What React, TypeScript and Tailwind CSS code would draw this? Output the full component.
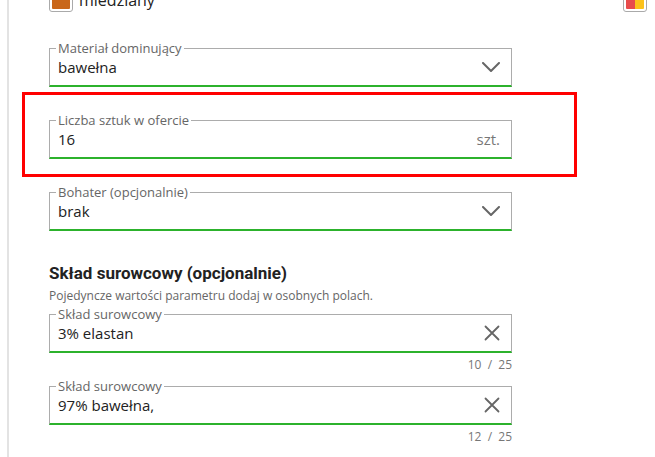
import { ReactNode } from "react";

const font = { fontFamily: "'Open Sans', 'Liberation Sans', sans-serif" };

function Chevron() {
  return (
    <svg width="18" height="10" viewBox="0 0 18 10" fill="none">
      <polyline points="1,1 9,9 17,1" stroke="#666" strokeWidth="2" strokeLinecap="round" strokeLinejoin="round" />
    </svg>
  );
}

function Cross() {
  return (
    <svg width="16" height="16" viewBox="0 0 16 16" fill="none">
      <path d="M1.5 1.5 L14.5 14.5 M14.5 1.5 L1.5 14.5" stroke="#666" strokeWidth="1.8" strokeLinecap="round" />
    </svg>
  );
}

function Field({ label, value, right }: { label: string; value: string; right?: ReactNode }) {
  return (
    <div className="relative flex h-[39px] w-[463px] items-center border border-b-2 border-[#acacac] border-b-[#2cb22c] pl-2 pr-[11px]">
      <span className="absolute -top-[9px] left-[6px] bg-white px-[2px] text-[13px] leading-[16px] text-[#666]">{label}</span>
      <span className="flex-1 text-[15px] text-[#222]">{value}</span>
      {right}
    </div>
  );
}

function Counter({ text }: { text: string }) {
  return (
    <div className="w-[463px] pt-[4px] text-right text-[12px] leading-[16px] text-[#777] whitespace-pre">{text}</div>
  );
}

export default function App() {
  return (
    <div className="h-screen overflow-hidden bg-white" style={font}>
      <div className="flow-root ml-[7px] h-full border-l-2 border-[#e3e3e3] pl-[40px]">
        {/* colour options row */}
        <div className="-mt-[12px] flex w-[598px] items-center justify-between">
          <div className="flex items-center gap-[6px]">
            <div className="flex h-[24px] w-[24px] items-center justify-center rounded-[3px] border border-[#aaa] bg-white">
              <div className="h-[18px] w-[18px] rounded-[1px] bg-[#c9671a]" />
            </div>
            <span className="text-[16px] text-[#222]">miedziany</span>
          </div>
          <div className="flex h-[24px] w-[24px] items-center justify-center rounded-[3px] border border-[#aaa] bg-white">
            <div className="flex h-[18px] w-[18px] overflow-hidden rounded-[1px]">
              <div className="w-1/2 bg-[#e84c4c]" />
              <div className="w-1/2 bg-[#fcc21b]" />
            </div>
          </div>
        </div>

        <div className="mt-[36px]">
          <Field label="Materiał dominujący" value="bawełna" right={<Chevron />} />
        </div>

        <div className="-ml-[27px] mt-[5px] w-[555px] border-[3px] border-[#ff0000] pb-[15px] pl-[24px] pt-[25px]">
          <Field label="Liczba sztuk w ofercie" value="16" right={<span className="text-[15px] text-[#777]">szt.</span>} />
        </div>

        <div className="mt-[15px]">
          <Field label="Bohater (opcjonalnie)" value="brak" right={<Chevron />} />
        </div>

        <h2 className="mt-[32px] text-[17px] font-bold leading-[20px] text-[#222]" style={{ fontFamily: "Roboto, 'Liberation Sans', sans-serif" }}>
          Skład surowcowy (opcjonalnie)
        </h2>
        <p className="mt-[5px] text-[12px] leading-[16px] text-[#666]">Pojedyncze wartości parametru dodaj w osobnych polach.</p>

        <div className="mt-[10px]">
          <Field label="Skład surowcowy" value="3% elastan" right={<Cross />} />
          <Counter text="10  /  25" />
        </div>

        <div className="mt-[13px]">
          <Field label="Skład surowcowy" value="97% bawełna," right={<Cross />} />
          <Counter text="12  /  25" />
        </div>
      </div>
    </div>
  );
}
